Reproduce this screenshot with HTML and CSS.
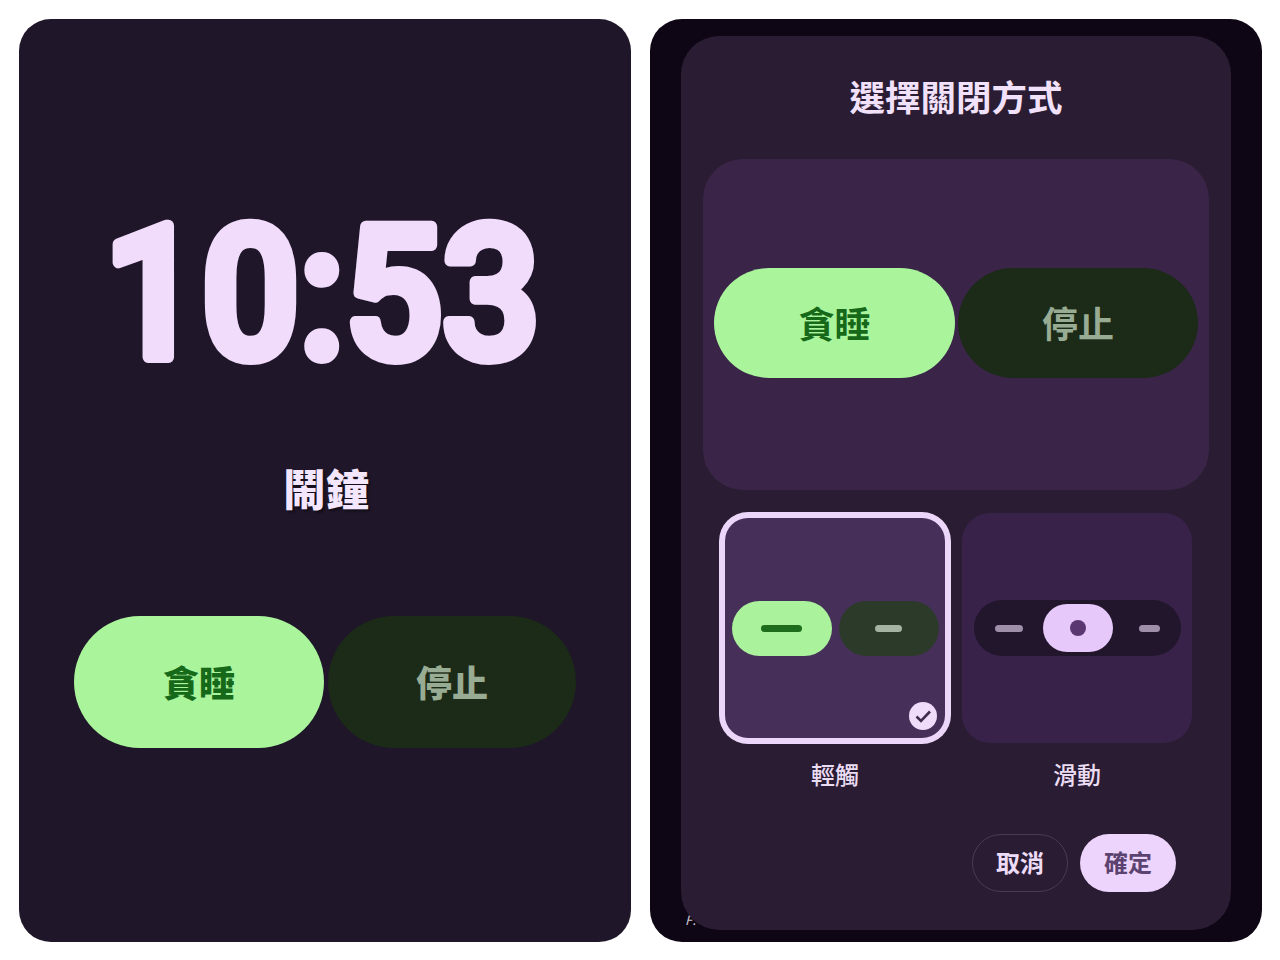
FILE: index.html
```html
<!DOCTYPE html>
<html lang="zh-Hant">
<head>
<meta charset="utf-8">
<title>鬧鐘</title>
<link rel="stylesheet" href="styles.css">
</head>
<body>
<main class="page">
  <section class="phone alarm">
    <svg class="clock" viewBox="0 0 612 240" width="612" height="240" role="img" aria-label="10:53">
      <text class="clock-text" x="303" y="182" text-anchor="middle" textLength="436" lengthAdjust="spacingAndGlyphs">10:53</text>
    </svg>
    <h1 class="alarm-label">鬧鐘</h1>
    <div class="actions alarm-actions">
      <button class="pill snooze alarm-pill">貪睡</button>
      <button class="pill stop alarm-pill alarm-stop">停止</button>
    </div>
  </section>

  <section class="phone dimmed">
    <span class="peek">F:</span>
    <div class="dialog">
      <h2 class="dialog-title">選擇關閉方式</h2>
      <div class="preview">
        <div class="actions preview-actions">
          <button class="pill snooze preview-pill">貪睡</button>
          <button class="pill stop preview-pill">停止</button>
        </div>
      </div>
      <div class="options">
        <div class="option">
          <div class="card selected">
            <div class="mini-pill mini-snooze"><span class="dash dash-dark"></span></div>
            <div class="mini-pill mini-stop"><span class="dash dash-pale"></span></div>
            <svg class="check" viewBox="0 0 28 28" width="28" height="28" aria-hidden="true">
              <circle cx="14" cy="14" r="14" fill="#efdcfb"/>
              <path d="M7.5 14.5l4.5 4.5 9-9.5" fill="none" stroke="#3f2c4e" stroke-width="2.6"/>
            </svg>
          </div>
          <span class="option-label">輕觸</span>
        </div>
        <div class="option">
          <div class="card">
            <div class="track">
              <span class="dash dash-grey dash-long"></span>
              <span class="thumb"><span class="thumb-dot"></span></span>
              <span class="dash dash-grey dash-short"></span>
            </div>
          </div>
          <span class="option-label">滑動</span>
        </div>
      </div>
      <div class="dialog-actions">
        <button class="text-btn outline">取消</button>
        <button class="text-btn filled">確定</button>
      </div>
    </div>
  </section>
</main>
</body>
</html>
```
FILE: styles.css
```css
* { box-sizing: border-box; }
html, body { margin: 0; height: 100%; background: #fff; }
body { font-family: "Noto Sans CJK TC", "Noto Sans", sans-serif; }
h1, h2 { margin: 0; }
button { border: 0; padding: 0; font-family: inherit; }

.page {
  width: 1280px;
  height: 960px;
  padding: 19px 18px 18px 19px;
  display: flex;
  gap: 19px;
}
.phone {
  width: 612px;
  height: 923px;
  border-radius: 32px;
  overflow: hidden;
  position: relative;
}

/* Left: alarm */
.alarm {
  background: #1f1629;
  display: flex;
  flex-direction: column;
  align-items: center;
  padding-top: 156px;
}
.clock { display: block; }
.clock-text {
  font-family: "Roboto", sans-serif;
  font-weight: 500;
  font-size: 184px;
  fill: #f1dcfb;
  stroke: #f1dcfb;
  stroke-width: 12px;
  stroke-linejoin: round;
}
.alarm-label {
  margin-top: 40px;
  color: #f4e6fc;
  font-size: 43px;
  line-height: 64px;
  font-weight: 900;
  text-shadow: 2px 2px 2px rgba(0, 0, 0, .45);
  position: relative;
  left: 1px;
}
.actions { display: flex; }
.alarm-actions { margin-top: 97px; gap: 4px; }
.pill {
  display: flex;
  align-items: center;
  justify-content: center;
  border-radius: 999px;
  font-weight: 900;
  padding-bottom: 2px;
}
.snooze { background: #aaf59c; color: #17691a; }
.stop { background: #1c2a18; color: #98ab93; }
.alarm-pill { width: 250px; height: 132px; font-size: 36px; }
.alarm-stop { width: 248px; }

/* Right: dialog */
.dimmed {
  background: #0e0614;
  padding: 17px 31px 12px;
}
.peek {
  position: absolute;
  left: 35px;
  bottom: 14px;
  color: #c9c2cd;
  font-size: 13px;
  line-height: 16px;
  font-style: italic;
}
.dialog {
  position: relative;
  height: 100%;
  background: #2a1c32;
  border-radius: 38px;
  padding: 0 22px;
  display: flex;
  flex-direction: column;
}
.dialog-title {
  margin-top: 30px;
  text-align: center;
  color: #f1e1fa;
  font-size: 35.5px;
  line-height: 60px;
  font-weight: 700;
}
.preview {
  margin-top: 33px;
  height: 331px;
  background: #3a2549;
  border-radius: 40px;
  display: flex;
  align-items: center;
  justify-content: center;
  padding-bottom: 4px;
}
.preview-actions { gap: 3px; }
.preview-pill { width: 241px; height: 110px; font-size: 36px; font-weight: 700; }
.preview-pill.stop { width: 240px; }

.options {
  margin-top: 23px;
  display: flex;
  justify-content: center;
  gap: 12px;
}
.option {
  width: 230px;
  display: flex;
  flex-direction: column;
  align-items: center;
  gap: 12px;
}
.option-label {
  color: #eadcf2;
  font-size: 24px;
  line-height: 38px;
  font-weight: 500;
}
.card {
  position: relative;
  width: 230px;
  height: 230px;
  border-radius: 28px;
  background: #38224a;
  display: flex;
  align-items: center;
  justify-content: center;
}
.card.selected {
  background: #46305a;
  border: 5px solid #ecd7fa;
  box-shadow: 0 0 0 1px #ecd7fa;
  gap: 7px;
}
.mini-pill {
  width: 100px;
  height: 55px;
  border-radius: 999px;
  display: flex;
  align-items: center;
  justify-content: center;
}
.mini-snooze { background: #aaf29b; }
.mini-stop { background: #2c3a2a; }
.dash { display: block; height: 7px; border-radius: 4px; }
.dash-dark { width: 41px; background: #1d6d1c; }
.dash-pale { width: 27px; background: #a5b3a2; }
.dash-grey { background: #a08fa9; }
.dash-long { width: 28px; }
.dash-short { width: 21px; }
.check { position: absolute; right: 8px; bottom: 8px; }
.track {
  width: 207px;
  height: 56px;
  border-radius: 999px;
  background: #21162b;
  padding: 0 21px;
  display: flex;
  align-items: center;
}
.thumb {
  width: 70px;
  height: 48px;
  margin: 0 26px 0 20px;
  border-radius: 999px;
  background: #e7c8fb;
  display: flex;
  align-items: center;
  justify-content: center;
}
.thumb-dot { width: 16px; height: 16px; border-radius: 50%; background: #5a3770; }

.dialog-actions {
  margin-top: 41px;
  display: flex;
  justify-content: flex-end;
  gap: 12px;
  padding-right: 33px;
}
.text-btn {
  width: 96px;
  height: 58px;
  border-radius: 999px;
  font-size: 24px;
  font-weight: 700;
  padding-bottom: 4px;
}
.outline { background: transparent; border: 1px solid #4a3b52; color: #eddcf8; }
.filled { background: #ecd4fc; color: #5c4270; }
```
